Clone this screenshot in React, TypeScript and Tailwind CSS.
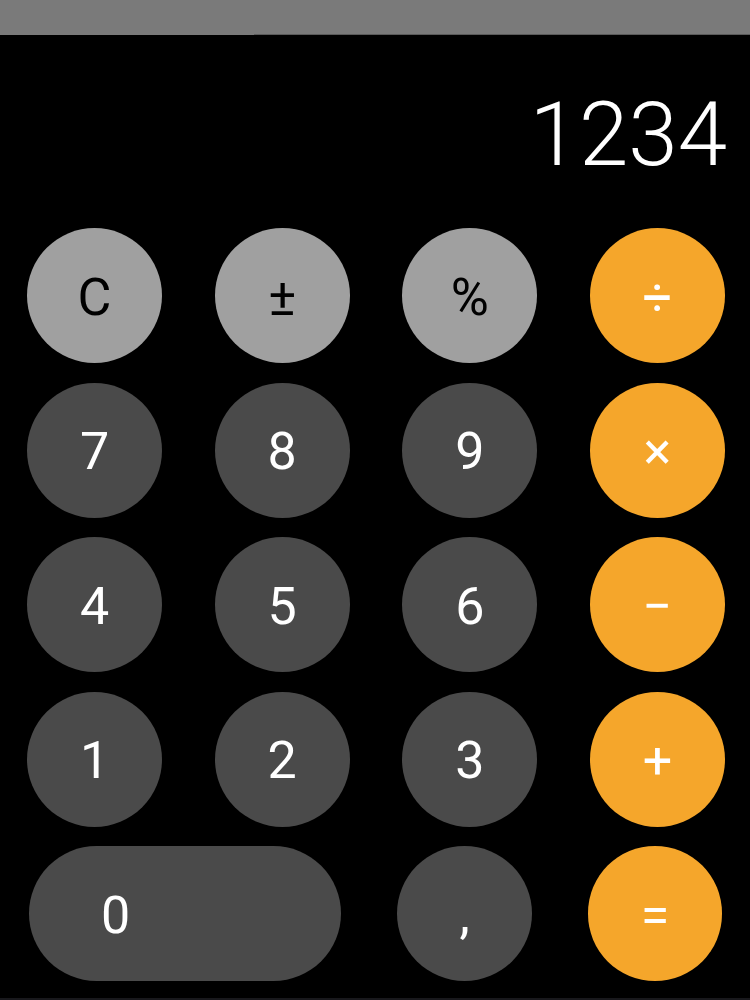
import React from 'react';

type Kind = 'fn' | 'num' | 'op';

const styles: Record<Kind, string> = {
  fn: 'bg-[#a0a0a0] text-black',
  num: 'bg-[#4a4a4a] text-white',
  op: 'bg-[#f5a62b] text-white',
};

const Key: React.FC<{ label: string; kind: Kind; className?: string }> = ({ label, kind, className = '' }) => (
  <button
    className={`h-[135px] rounded-full flex items-center justify-center pt-[4px] text-[52px] leading-none ${styles[kind]} ${className}`}
  >
    {label}
  </button>
);

const rows: { label: string; kind: Kind }[][] = [
  [
    { label: 'C', kind: 'fn' },
    { label: '±', kind: 'fn' },
    { label: '%', kind: 'fn' },
    { label: '÷', kind: 'op' },
  ],
  [
    { label: '7', kind: 'num' },
    { label: '8', kind: 'num' },
    { label: '9', kind: 'num' },
    { label: '×', kind: 'op' },
  ],
  [
    { label: '4', kind: 'num' },
    { label: '5', kind: 'num' },
    { label: '6', kind: 'num' },
    { label: '−', kind: 'op' },
  ],
  [
    { label: '1', kind: 'num' },
    { label: '2', kind: 'num' },
    { label: '3', kind: 'num' },
    { label: '+', kind: 'op' },
  ],
];

export default function App() {
  return (
    <div className="w-[750px] h-[1000px] bg-black flex flex-col" style={{ fontFamily: 'Roboto, "Noto Sans", sans-serif' }}>
      <div className="h-[35px] bg-[#7a7a7a] shrink-0 flex items-end">
        <div className="ml-[254px] flex-1 h-px bg-[#5a5a5a]" />
      </div>

      <div className="h-[193px] pt-[55px] pr-[23px] text-right shrink-0">
        <div className="text-white text-[89px] font-light leading-none">1234</div>
      </div>

      <div className="flex flex-col gap-[19.5px]">
        {rows.map((row, i) => (
          <div key={i} className="flex justify-between pl-[27px] pr-[25px]">
            {row.map((k) => (
              <Key key={k.label} label={k.label} kind={k.kind} className="w-[135px]" />
            ))}
          </div>
        ))}

        <div className="flex gap-[56px] pl-[29px]">
          <Key label="0" kind="num" className="w-[312px] justify-start pl-[72px]" />
          <Key label="," kind="num" className="w-[135px]" />
          <Key label="=" kind="op" className="w-[134px]" />
        </div>
      </div>

      <div className="mt-auto h-[2px] bg-[#18181c]" />
    </div>
  );
}
